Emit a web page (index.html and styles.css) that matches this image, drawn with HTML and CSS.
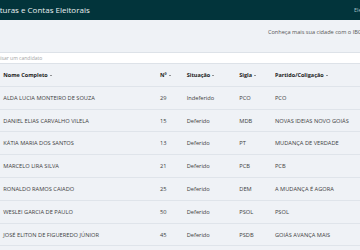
FILE: index.html
```html
<!DOCTYPE html>
<html lang="pt-BR">
<head>
<meta charset="utf-8">
<title>Candidaturas e Contas Eleitorais</title>
<link rel="stylesheet" href="styles.css">
</head>
<body>
<div class="page">
  <header class="topbar">
    <span class="title">Candidaturas e Contas Eleitorais</span>
    <a class="nav" href="#">Eleições 2018</a>
  </header>
  <div class="intro">
    <a class="ibge" href="#">Conheça mais sua cidade com o IBGE</a>
  </div>
  <div class="search">
    <input class="search-input" type="text" placeholder="Pesquisar um candidato">
  </div>
  <div class="table">
    <div class="row head">
      <span>Nome Completo <i class="caret"></i></span>
      <span>Nº <i class="caret"></i></span>
      <span>Situação <i class="caret"></i></span>
      <span>Sigla <i class="caret"></i></span>
      <span>Partido/Coligação <i class="caret"></i></span>
    </div>
    <div class="row"><span>ALDA LUCIA MONTEIRO DE SOUZA</span><span>29</span><span>Indeferido</span><span>PCO</span><span>PCO</span></div>
    <div class="row"><span>DANIEL ELIAS CARVALHO VILELA</span><span>15</span><span>Deferido</span><span>MDB</span><span>NOVAS IDEIAS NOVO GOIÁS</span></div>
    <div class="row"><span>KÁTIA MARIA DOS SANTOS</span><span>13</span><span>Deferido</span><span>PT</span><span>MUDANÇA DE VERDADE</span></div>
    <div class="row"><span>MARCELO LIRA SILVA</span><span>21</span><span>Deferido</span><span>PCB</span><span>PCB</span></div>
    <div class="row"><span>RONALDO RAMOS CAIADO</span><span>25</span><span>Deferido</span><span>DEM</span><span>A MUDANÇA É AGORA</span></div>
    <div class="row"><span>WESLEI GARCIA DE PAULO</span><span>50</span><span>Deferido</span><span>PSOL</span><span>PSOL</span></div>
    <div class="row"><span>JOSÉ ELITON DE FIGUEREDO JÚNIOR</span><span>45</span><span>Deferido</span><span>PSDB</span><span>GOIÁS AVANÇA MAIS</span></div>
  </div>
</div>
</body>
</html>
```

FILE: styles.css
```css
html, body {
  margin: 0;
  padding: 0;
  background: #eff2f6;
}
body {
  font-family: "Open Sans", "Liberation Sans", sans-serif;
  color: #3d3d3d;
  overflow: hidden;
}
.page {
  width: 360px;
  height: 250px;
  overflow: hidden;
}
.topbar {
  height: 19.5px;
  background: #02343b;
  display: flex;
  align-items: center;
  justify-content: space-between;
  white-space: nowrap;
}
.title {
  margin-left: -31px;
  font-size: 8px;
  color: #e9f0f1;
}
.nav {
  margin-right: -28px;
  font-size: 5.4px;
  color: #a9c2c6;
  text-decoration: none;
}
.intro {
  height: 32.8px;
  box-sizing: border-box;
  padding-top: 8.6px;
  display: flex;
  justify-content: flex-end;
  white-space: nowrap;
}
.ibge {
  margin-right: -5px;
  font-size: 5.6px;
  line-height: 8px;
  color: #555;
  text-decoration: none;
}
.search {
  height: 12px;
  box-sizing: border-box;
  background: #fff;
  border-top: 1px solid #dde2e8;
  border-bottom: 1px solid #dde2e8;
  display: flex;
  align-items: center;
  overflow: hidden;
}
.search-input {
  border: 0;
  outline: 0;
  padding: 0;
  margin-left: -14px;
  width: 300px;
  background: transparent;
  font-family: inherit;
  font-size: 5px;
  color: #555;
}
.search-input::placeholder {
  color: #a3a3a3;
}
.row {
  display: grid;
  grid-template-columns: 156.7px 26.7px 52.6px 35.7px 1fr;
  align-items: center;
  height: 22.8px;
  box-sizing: border-box;
  padding-left: 3.3px;
  border-bottom: 1px solid #dfe4ea;
  font-size: 5.7px;
  white-space: nowrap;
}
.row.head {
  height: 22.6px;
  font-weight: 700;
  font-size: 5.5px;
  color: #222;
}
.caret {
  display: inline-block;
  width: 0;
  height: 0;
  border-left: 1.6px solid transparent;
  border-right: 1.6px solid transparent;
  border-top: 1.6px solid #333;
  vertical-align: middle;
  margin-left: 0.5px;
}
```
